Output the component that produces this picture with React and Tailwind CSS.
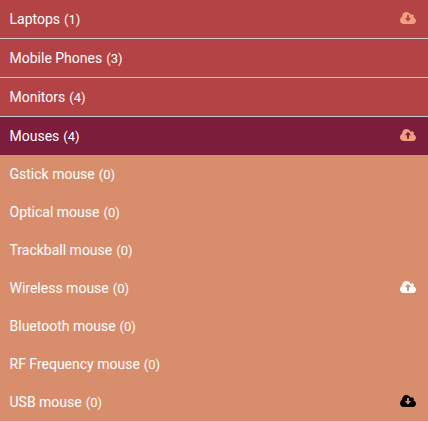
const CLOUD =
  "M1920 1024q0 159-112.5 271.5t-271.5 112.5h-1088q-185 0-316.5-131.5t-131.5-316.5q0-130 70-240t188-165q-2-30-2-43 0-212 150-362t362-150q156 0 285.5 87t188.5 231q71-62 166-62 106 0 181 75t75 181q0 76-41 138 130 31 213.5 135.5t83.5 238.5z";
const DOWN = "M845 350h230v360h260l-375 420-375-420h260z";
const UP = "M960 320l375 420h-260v400h-230v-400h-260z";

const categories = [
  { name: "Laptops", count: 1, icon: "down" },
  { name: "Mobile Phones", count: 3 },
  { name: "Monitors", count: 4 },
  { name: "Mouses", count: 4, icon: "up", active: true },
];

const children = [
  { name: "Gstick mouse", count: 0 },
  { name: "Optical mouse", count: 0 },
  { name: "Trackball mouse", count: 0 },
  { name: "Wireless mouse", count: 0, icon: "up", tint: "text-white" },
  { name: "Bluetooth mouse", count: 0 },
  { name: "RF Frequency mouse", count: 0 },
  { name: "USB mouse", count: 0, icon: "down", tint: "text-black" },
];

function CloudIcon({ direction, className }) {
  return (
    <svg viewBox="0 0 1920 1408" preserveAspectRatio="none" fill="currentColor" className={`mb-0.5 h-3 w-4 ${className}`}>
      <path fillRule="evenodd" d={CLOUD + (direction === "up" ? UP : DOWN)} />
    </svg>
  );
}

function Row({ item, className }) {
  return (
    <li className={`flex items-center justify-between pl-[9.5px] pr-3 ${className}`}>
      <span>
        {item.name} <span className="ml-[0.5px] text-[13px]">({item.count})</span>
      </span>
      {item.icon && <CloudIcon direction={item.icon} className={item.tint || "text-[#f0a080]"} />}
    </li>
  );
}

export default function App() {
  return (
    <nav className="h-[422px] w-[428px] overflow-hidden bg-[#d88e6d] font-['Roboto',sans-serif] text-[14px] leading-5 text-white">
      <ul>
        {categories.map((item) => (
          <Row
            key={item.name}
            item={item}
            className={item.active ? "h-[38px] bg-[#7b1d3b]" : "h-[39px] border-b border-[#cccccc] bg-[#b34344]"}
          />
        ))}
      </ul>
      <ul className="border-b border-[#cccccc]">
        {children.map((item) => (
          <Row key={item.name} item={item} className="h-[38px]" />
        ))}
      </ul>
    </nav>
  );
}
